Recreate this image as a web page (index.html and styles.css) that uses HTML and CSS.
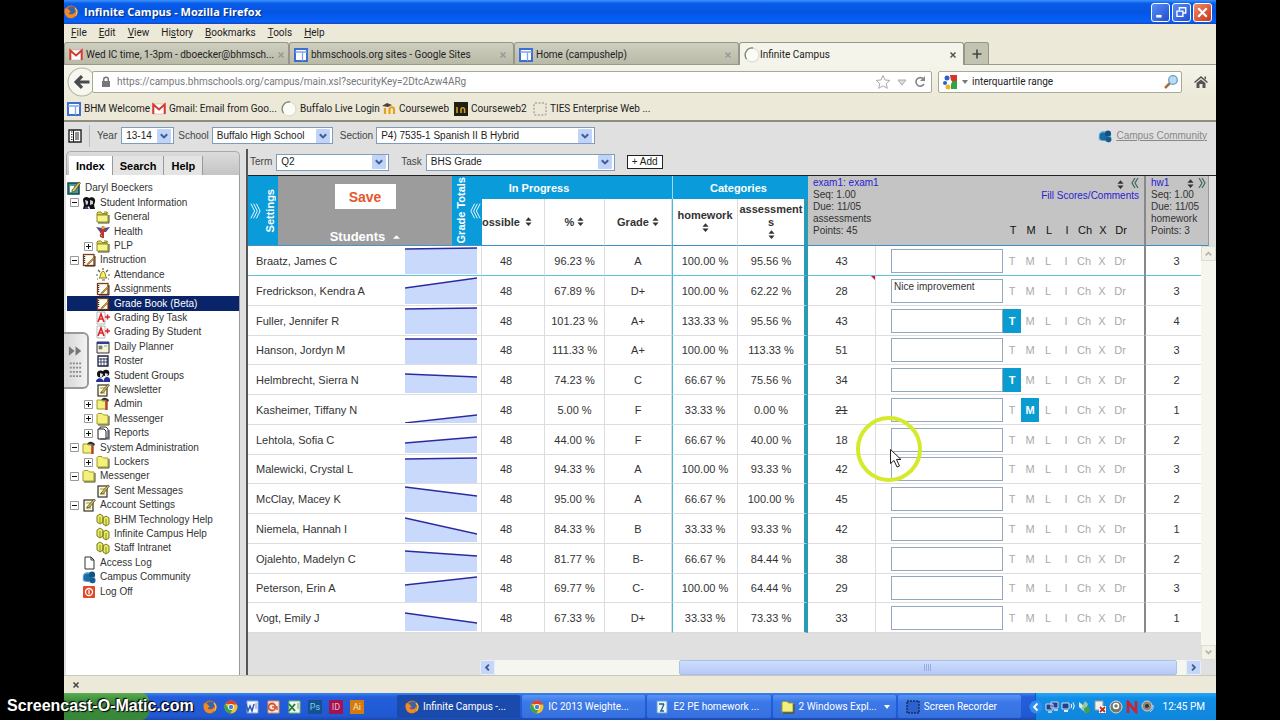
FILE: index.html
```html
<!DOCTYPE html>
<html lang="en">
<head>
<meta charset="utf-8">
<title>Infinite Campus - Mozilla Firefox</title>
<link rel="stylesheet" href="styles.css">
</head>
<body>
<svg class="defs" aria-hidden="true">
  <defs>
    <symbol id="firefox" viewBox="0 0 14 14"><circle cx="7" cy="7" r="6.5" fill="#e0701a"/><circle cx="7.6" cy="5.6" r="4" fill="#3d62a8"/><path d="M1 3c1 1 2 .6 3 1.200 2 0 1 2 3 2.500-1 1.300-2 .6-2.600 1.200C6 10.500 10 10 11 6.500c1.200 4-2 7-5 6.500C2 12.500-.2 8 1 3z" fill="#f08a24"/><path d="M11 3c2 2 2.500 5 .5 8" stroke="#f7c23c" stroke-width="1.300" fill="none"/></symbol>
    <symbol id="gmail" viewBox="0 0 14 12"><rect x=".5" y="1" width="13" height="10" rx="1" fill="#fff" stroke="#d9a5a0" stroke-width=".6"/><path d="M1.300 11V1.500L7 6.500l5.700-5V11" fill="none" stroke="#d43b30" stroke-width="2"/></symbol>
    <symbol id="sites" viewBox="0 0 14 14"><rect x="1" y="1" width="12" height="12" fill="#fff" stroke="#3c6fd1" stroke-width="2"/><path d="M1 4h12M8.500 4v9" stroke="#7ea6ec" stroke-width="1.300"/></symbol>
    <symbol id="ring" viewBox="0 0 16 16"><circle cx="8" cy="8" r="7" fill="#fcfcf7" stroke="#d5d5c8"/><path d="M2.500 12A7 7 0 0 1 9 1" fill="none" stroke="#7b8a78" stroke-width="1.300"/></symbol>
    <symbol id="moodle" viewBox="0 0 14 14"><path d="M3 12V6M7.500 12V7.500a2.200 2.200 0 0 1 4.500 0V12" fill="none" stroke="#e8a01c" stroke-width="2.200"/><path d="M0 4l5-3 5 2-4 2z" fill="#4b4537"/></symbol>
    <symbol id="moodledark" viewBox="0 0 14 14"><path d="M0 0h14v14H0z" fill="#201f14"/><path d="M3 11V5M7 11V7.500a1.800 1.800 0 0 1 3.600 0V11" fill="none" stroke="#d39c2a" stroke-width="1.600"/></symbol>
    <symbol id="dashed" viewBox="0 0 14 14"><rect x="1" y="1" width="12" height="12" rx="1" fill="none" stroke="#8b8b78" stroke-dasharray="2 1.500"/></symbol>
    <symbol id="close" viewBox="0 0 8 8"><path d="M1.500 1.500l5 5m0-5l-5 5" stroke="currentColor" stroke-width="1.500"/></symbol>
    <symbol id="chev" viewBox="0 0 14 14"><rect width="14" height="14" rx="1" fill="#c0d3f8"/><path d="M3.800 5.200L7 8.400l3.200-3.200" fill="none" stroke="#3f5c94" stroke-width="2"/></symbol>
    <symbol id="sort" viewBox="0 0 8 10"><path d="M4 0l3.500 4h-7zM4 10L.5 6h7z" fill="#333"/></symbol>
    <symbol id="community" viewBox="0 0 14 14"><path d="M6 2C2 2 0 5 1 7.500c-2 4 3 5 4 4l6 2c3-1 3-4 2-6 1-4-1-6-4-5z" fill="#6cb4d8"/><circle cx="5.500" cy="7.500" r="4" fill="#1c6ba3"/><circle cx="10" cy="4.500" r="3" fill="#14517f"/><circle cx="10.500" cy="10.500" r="2.800" fill="#185c8f"/></symbol>
    <symbol id="folder" viewBox="0 0 14 14"><path d="M1 4V2.500L2 1.500h4L7.500 3H12v9H1z" fill="#f3f07c" stroke="#a49b28"/><path d="M13 4v9H2" fill="none" stroke="#4b481b"/></symbol>
    <symbol id="dfolder" viewBox="0 0 14 14"><path d="M1 5V3l1-1h3l1 1.500h5V5zM8 2h3l1 1.500" fill="#dcd94c" stroke="#8d8b24"/><path d="M1 5h11v7H1z" fill="#f5f58a" stroke="#8d8b24"/><path d="M13 5v8H2" fill="none" stroke="#4b481b"/></symbol>
    <symbol id="tools" viewBox="0 0 14 14"><path d="M1 3h4l1 1h4v8H1z" fill="#f3f07c" stroke="#a49b28"/><path d="M5 2.500c3-3 6-2 8 .5l-1 2-2-1.500H7z" fill="#333"/><path d="M10.500 4v9" stroke="#b6402a" stroke-width="2.400"/></symbol>
    <symbol id="person" viewBox="0 0 14 14"><path d="M1 4c0-3 4-4 6-2 3-2 7 0 6 4l-1 3 1 4H8l-1-3-3 3H1l1-4z" fill="#111"/><path d="M3 4l3 1v3l-2 1zM8 4l3 1v3l-3 1z" fill="#c9ccd6"/><path d="M2 13l2-3 3 3z" fill="#2b38a5"/></symbol>
    <symbol id="group" viewBox="0 0 14 14"><circle cx="4.500" cy="5" r="3.500" fill="#111"/><circle cx="10" cy="4" r="3.300" fill="#111"/><path d="M0 13c0-5 7-5 8 0zM8 13c-1-6 5-6 6-3v3z" fill="#26329a"/><path d="M4 4l3 1-1 3H4zM9 4l3 1-1 3H9z" fill="#dde"/></symbol>
    <symbol id="health" viewBox="0 0 14 14"><path d="M0 2l6 1h2l6-1-4 5H4z" fill="#5b4a86"/><path d="M7 2v11" stroke="#c23434" stroke-width="2"/><path d="M10 5c-7 0-7 3-2 4-5 0-4 3-1 3" fill="none" stroke="#b23a2c" stroke-width="1.500"/><circle cx="7" cy="2.500" r="1.800" fill="#e3a02c"/></symbol>
    <symbol id="book" viewBox="0 0 14 14"><rect x="1.500" y="1.500" width="10.500" height="11" fill="#fffdf2" stroke="#7d3d25" stroke-width="1.300"/><path d="M2.500 3v8" stroke="#333" stroke-width="1.500" stroke-dasharray="1 1"/><path d="M6 10l6-6 1 1-6 6-2 .5z" fill="#d0a030" stroke="#634511" stroke-width=".5"/><path d="M13 3v10H3" fill="none" stroke="#4b2419"/></symbol>
    <symbol id="user" viewBox="0 0 14 14"><rect x="1" y="2" width="11" height="11" fill="#3f9b95" stroke="#15434f" stroke-width="1.500"/><path d="M3 5h4v6H3z" fill="#fff"/><path d="M5 9l7-8 1.500 1L8 10l-3 1z" fill="#edc24d" stroke="#333" stroke-width=".6"/></symbol>
    <symbol id="note" viewBox="0 0 14 14"><rect x="2" y="2" width="9" height="11" fill="#fdfbd1" stroke="#333" stroke-width="1.200"/><path d="M4 5h5M4 10h5" stroke="#98924a"/><path d="M5 9l7-8 1.500 1L8 9l-3 1z" fill="#dab942" stroke="#333" stroke-width=".6"/></symbol>
    <symbol id="bell" viewBox="0 0 14 14"><path d="M3 10c2-1 1-6 4-7 3 1 2 6 4 7z" fill="#f6ef63" stroke="#887e1d"/><path d="M0 7h2M12 7h2M2 2l2 2M12 2l-2 2M6 12h3M7 0v2M1 11h1M12 11h1" stroke="#5e5b36" stroke-width="1.200"/></symbol>
    <symbol id="grade" viewBox="0 0 14 14"><path d="M1 1h8v12H1z" fill="#fff" stroke="#b9b9b9"/><path d="M2 11l3-8 3 8M3 8h4" fill="none" stroke="#d22" stroke-width="1.600"/><path d="M9 6h5M11.500 3.500v5" stroke="#d22" stroke-width="1.500"/></symbol>
    <symbol id="planner" viewBox="0 0 14 14"><path d="M1 2h12v11H1z" fill="#f4f4d8" stroke="#333"/><path d="M1 2h12v2H1z" fill="#2b3fa2"/><path d="M3 6h3v3H3zM8 6h3" fill="#788" stroke="#667" stroke-width=".6"/></symbol>
    <symbol id="roster" viewBox="0 0 14 14"><path d="M2 2h10v10H2z" fill="#fff" stroke="#1b2148" stroke-width="1.300"/><path d="M2 5h10M2 8h10M5 4v8M8 4v8M11 4v8" stroke="#1b2148" stroke-width=".8"/></symbol>
    <symbol id="pages" viewBox="0 0 14 14"><path d="M4 1h6l2 2v9H4z" fill="#fff" stroke="#333"/><path d="M2 3h6l2 2v8H2z" fill="#fff" stroke="#222"/><path d="M13 4v9H4" fill="none" stroke="#445" stroke-width="1.200"/></symbol>
    <symbol id="page" viewBox="0 0 14 14"><path d="M3 1h6l3 3v9H3z" fill="#fff" stroke="#333"/><path d="M9 1v3h3" fill="none" stroke="#333"/></symbol>
    <symbol id="links" viewBox="0 0 14 14"><path d="M1 3l3-2 3 2v6l-3 2-3-2zM7 5l3-2 3 2v6l-3 2-3-2z" fill="#e9ec62" stroke="#77791f"/><path d="M4 4v7M10 6v7" stroke="#8d8f2b"/></symbol>
    <symbol id="power" viewBox="0 0 14 14"><rect x="1" y="1" width="12" height="12" rx="1" fill="#e04a28"/><circle cx="7" cy="7" r="3.500" fill="none" stroke="#fff" stroke-width="1.300"/><path d="M7 5v4" stroke="#fff" stroke-width="1.300"/></symbol>
    <symbol id="plus" viewBox="0 0 9 9"><path d="M.5.5h8v8h-8z" fill="#fff" stroke="#999"/><path d="M2 4.500h5M4.500 2v5" stroke="#111"/></symbol>
    <symbol id="minus" viewBox="0 0 9 9"><path d="M.5.5h8v8h-8z" fill="#fff" stroke="#999"/><path d="M2 4.500h5" stroke="#111"/></symbol>
    <symbol id="chrome" viewBox="0 0 14 14"><circle cx="7" cy="7" r="6.500" fill="#f1c22b"/><path d="M1.400 3.700A6.500 6.500 0 0 1 13 4.500H7z" fill="#db4331"/><path d="M1.300 3.800A6.500 6.500 0 0 0 6.500 13.500L8.500 9 4.500 8.500z" fill="#3ba24f"/><circle cx="7" cy="7" r="2.900" fill="#fff"/><circle cx="7" cy="7" r="2.200" fill="#4583d8"/></symbol>
    <symbol id="word" viewBox="0 0 14 14"><path d="M2 1h11v12H2z" fill="#f4f7fd" stroke="#8aa6da"/><path d="M1 4l2 7 2-5 2 5 2-7" fill="none" stroke="#2d5ab4" stroke-width="1.500"/><path d="M10 4h2M10 6h2M10 8h2" stroke="#7593cc"/></symbol>
    <symbol id="ppt" viewBox="0 0 14 14"><path d="M2 1h11v12H2z" fill="#fbeae2" stroke="#d98d6c"/><circle cx="6" cy="7" r="3.500" fill="none" stroke="#d4522a" stroke-width="1.800"/><path d="M6 7h5v3" fill="none" stroke="#d4522a" stroke-width="1.400"/></symbol>
    <symbol id="excel" viewBox="0 0 14 14"><path d="M2 1h11v12H2z" fill="#eef8ec" stroke="#7dba7c"/><path d="M2 4l6 7M8 4l-6 7" stroke="#24803a" stroke-width="1.900"/><path d="M10 4h2M10 6h2M10 8h2" stroke="#69a96a"/></symbol>
    <symbol id="snip" viewBox="0 0 14 14"><rect x="1" y="1" width="12" height="12" fill="#2c62cf" stroke="#111" stroke-dasharray="2 1"/></symbol>
    <symbol id="doc" viewBox="0 0 14 14"><path d="M2 1h10v12H2z" fill="#eaf5fc" stroke="#69a4c8"/><path d="M4 4h5M9 4L6 11M5 11h4" stroke="#26617d" stroke-width="1.300"/></symbol>
    <symbol id="pc" viewBox="0 0 14 14"><path d="M1 4h7v6H1zM6 2h7v6H6z" fill="#22408c" stroke="#c9d5ee"/><path d="M3 12h4M9 10h4" stroke="#d8e0f2" stroke-width="1.500"/></symbol>
  </defs>
</svg>

<div class="window">
  <header class="titlebar">
    <svg class="i14"><use href="#firefox"/></svg>
    <h1>Infinite Campus - Mozilla Firefox</h1>
    <div class="winbtns">
      <button aria-label="Minimize"><svg viewBox="0 0 16 16"><path d="M4 11.500h5" stroke="#fff" stroke-width="2.500"/></svg></button>
      <button aria-label="Restore"><svg viewBox="0 0 16 16"><path d="M6 6V3.500h6v5H9.500" fill="none" stroke="#fff" stroke-width="1.300"/><path d="M3.700 6.700h5.600v5H3.700z" fill="none" stroke="#fff" stroke-width="1.300"/></svg></button>
      <button class="red" aria-label="Close"><svg viewBox="0 0 16 16"><path d="M4 4l8 8m0-8l-8 8" stroke="#fff" stroke-width="2"/></svg></button>
    </div>
  </header>

  <nav class="menubar" aria-label="Menu">
    <button><u>F</u>ile</button><button><u>E</u>dit</button><button><u>V</u>iew</button><button>Hi<u>s</u>tory</button><button><u>B</u>ookmarks</button><button><u>T</u>ools</button><button><u>H</u>elp</button>
  </nav>

  <div class="tabs">
    <div class="tab"><svg class="i14"><use href="#gmail"/></svg><span>Wed IC time, 1-3pm - dboecker@bhmsch...</span><button aria-label="Close tab"><svg class="i8"><use href="#close"/></svg></button></div>
    <div class="tab"><svg class="i14"><use href="#sites"/></svg><span>bhmschools.org sites - Google Sites</span><button aria-label="Close tab"><svg class="i8"><use href="#close"/></svg></button></div>
    <div class="tab"><svg class="i14"><use href="#sites"/></svg><span>Home (campushelp)</span><button aria-label="Close tab"><svg class="i8"><use href="#close"/></svg></button></div>
    <div class="tab active"><svg class="i16"><use href="#ring"/></svg><span>Infinite Campus</span><button aria-label="Close tab"><svg class="i8"><use href="#close"/></svg></button></div>
    <button class="newtab" aria-label="New tab"><svg viewBox="0 0 12 12"><path d="M6 1.500v9M1.500 6h9" stroke="#444" stroke-width="1.600"/></svg></button>
  </div>

  <div class="navbar">
    <button class="back" aria-label="Back"><svg viewBox="0 0 28 28"><circle cx="14" cy="14" r="13" fill="#f7f7f0" stroke="#b5b5a6"/><path d="M21 14H9M14 8.500L8.500 14l5.500 5.500" fill="none" stroke="#474b4b" stroke-width="3"/></svg></button>
    <div class="urlbox">
      <svg class="lock" viewBox="0 0 10 12"><path d="M1 5h8v6H1z" fill="#777"/><path d="M2.700 5V3.500a2.300 2.300 0 0 1 4.600 0V5" fill="none" stroke="#777" stroke-width="1.500"/></svg>
      <input type="text" aria-label="Address" value="https://campus.bhmschools.org/campus/main.xsl?securityKey=2DtcAzw4ARg">
      <svg class="i16" viewBox="0 0 16 16"><path d="M8 1.500l2 4.500 4.800.4-3.600 3.200 1.100 4.700L8 11.800l-4.300 2.500 1.100-4.700L1.200 6.400 6 6z" fill="#fff" stroke="#aaa"/></svg>
      <svg class="i14" viewBox="0 0 14 14"><path d="M3 5h8l-4 5z" fill="#ddd" stroke="#aaa"/></svg>
      <svg class="i14" viewBox="0 0 14 14"><path d="M11 9a4.300 4.300 0 1 1-.5-5" fill="none" stroke="#888" stroke-width="1.700"/><path d="M12 1v5H7z" fill="#888"/></svg>
    </div>
    <div class="searchbox">
      <svg class="i16" viewBox="0 0 16 16"><path d="M8 1h7v6H9z" fill="#d7352c"/><path d="M8 7h7v8H9V9z" fill="#33a342"/><circle cx="5" cy="4" r="2.500" fill="#2f62c4"/><circle cx="3" cy="9" r="2" fill="#2f62c4"/><circle cx="6" cy="13" r="2.500" fill="#edb62e"/><circle cx="8" cy="8" r="2" fill="#fff"/></svg>
      <svg class="caret" viewBox="0 0 6 4"><path d="M0 0h6L3 4z" fill="#777"/></svg>
      <input type="text" aria-label="Search" value="interquartile range">
      <svg class="i16" viewBox="0 0 16 16"><path d="M2 14l5-5" stroke="#a5703b" stroke-width="2.500"/><circle cx="10" cy="6" r="4.300" fill="#b7dcf3" stroke="#6f9dc4" stroke-width="1.300"/></svg>
    </div>
    <button class="home" aria-label="Home"><svg class="i16" viewBox="0 0 16 16"><path d="M1 8l7-6 7 6-1 1-6-5-6 5zM3.500 9L8 5.500 12.500 9v5H9.500v-4h-3v4h-3zM11.500 2.500h1.500v3l-1.500-1z" fill="#555"/></svg></button>
  </div>

  <nav class="bookmarks" aria-label="Bookmarks">
    <a href="#"><svg class="i14"><use href="#sites"/></svg>BHM Welcome</a>
    <a href="#"><svg class="i14"><use href="#gmail"/></svg>Gmail: Email from Goo...</a>
    <a href="#"><svg class="i16"><use href="#ring"/></svg>Buffalo Live Login</a>
    <a href="#"><svg class="i14"><use href="#moodle"/></svg>Courseweb</a>
    <a href="#"><svg class="i14"><use href="#moodledark"/></svg>Courseweb2</a>
    <a href="#"><svg class="i14"><use href="#dashed"/></svg>TIES Enterprise Web ...</a>
  </nav>

  <main class="app">
    <form class="context">
      <button class="toggle" type="button" aria-label="Toggle outline"><svg viewBox="0 0 14 14"><path d="M1 1h12v12H1z" fill="#fff" stroke="#222" stroke-width="1.400"/><path d="M3 3h1.500M3 5.500h1.500M3 8h1.500M3 10.500h1.500M7 4h4M7 6h4M7 8h4M7 10h4" stroke="#222"/><path d="M5.500 1v12" stroke="#222"/></svg></button>
      <label for="year">Year</label>
      <span class="pick year"><select id="year"><option>13-14</option></select><svg><use href="#chev"/></svg></span>
      <label for="school">School</label>
      <span class="pick school"><select id="school"><option>Buffalo High School</option></select><svg><use href="#chev"/></svg></span>
      <label for="section">Section</label>
      <span class="pick section"><select id="section"><option>P4) 7535-1 Spanish II B Hybrid</option></select><svg><use href="#chev"/></svg></span>
      <a class="community" href="#"><svg class="i14"><use href="#community"/></svg><span>Campus Community</span></a>
    </form>

    <div class="panes">
      <aside class="sidebar">
        <div class="sidetabs"><button class="on">Index</button><button>Search</button><button>Help</button></div>
        <ul class="tree">
          <li class="l0"><svg class="i14"><use href="#user"/></svg>Daryl Boeckers</li>
          <li class="l1"><i><svg><use href="#minus"/></svg></i><svg class="i14"><use href="#person"/></svg>Student Information</li>
          <li class="l2"><i></i><svg class="i14"><use href="#dfolder"/></svg>General</li>
          <li class="l2"><i></i><svg class="i14"><use href="#health"/></svg>Health</li>
          <li class="l2"><i><svg><use href="#plus"/></svg></i><svg class="i14"><use href="#dfolder"/></svg>PLP</li>
          <li class="l1"><i><svg><use href="#minus"/></svg></i><svg class="i14"><use href="#book"/></svg>Instruction</li>
          <li class="l2"><i></i><svg class="i14"><use href="#bell"/></svg>Attendance</li>
          <li class="l2"><i></i><svg class="i14"><use href="#book"/></svg>Assignments</li>
          <li class="l2 sel"><i></i><svg class="i14"><use href="#book"/></svg>Grade Book (Beta)</li>
          <li class="l2"><i></i><svg class="i14"><use href="#grade"/></svg>Grading By Task</li>
          <li class="l2"><i></i><svg class="i14"><use href="#grade"/></svg>Grading By Student</li>
          <li class="l2"><i></i><svg class="i14"><use href="#planner"/></svg>Daily Planner</li>
          <li class="l2"><i></i><svg class="i14"><use href="#roster"/></svg>Roster</li>
          <li class="l2"><i></i><svg class="i14"><use href="#group"/></svg>Student Groups</li>
          <li class="l2"><i></i><svg class="i14"><use href="#note"/></svg>Newsletter</li>
          <li class="l2"><i><svg><use href="#plus"/></svg></i><svg class="i14"><use href="#tools"/></svg>Admin</li>
          <li class="l2"><i><svg><use href="#plus"/></svg></i><svg class="i14"><use href="#folder"/></svg>Messenger</li>
          <li class="l2"><i><svg><use href="#plus"/></svg></i><svg class="i14"><use href="#pages"/></svg>Reports</li>
          <li class="l1"><i><svg><use href="#minus"/></svg></i><svg class="i14"><use href="#tools"/></svg>System Administration</li>
          <li class="l2"><i><svg><use href="#plus"/></svg></i><svg class="i14"><use href="#folder"/></svg>Lockers</li>
          <li class="l1"><i><svg><use href="#minus"/></svg></i><svg class="i14"><use href="#folder"/></svg>Messenger</li>
          <li class="l2"><i></i><svg class="i14"><use href="#note"/></svg>Sent Messages</li>
          <li class="l1"><i><svg><use href="#minus"/></svg></i><svg class="i14"><use href="#note"/></svg>Account Settings</li>
          <li class="l2"><i></i><svg class="i14"><use href="#links"/></svg>BHM Technology Help</li>
          <li class="l2"><i></i><svg class="i14"><use href="#links"/></svg>Infinite Campus Help</li>
          <li class="l2"><i></i><svg class="i14"><use href="#links"/></svg>Staff Intranet</li>
          <li class="l1"><i></i><svg class="i14"><use href="#page"/></svg>Access Log</li>
          <li class="l1"><i></i><svg class="i14"><use href="#community"/></svg>Campus Community</li>
          <li class="l1"><i></i><svg class="i14"><use href="#power"/></svg>Log Off</li>
        </ul>
        <button class="pull" aria-label="Expand panel"><svg viewBox="0 0 24 56"><path d="M5 13l6 5-6 5zM12 13l6 5-6 5z" fill="#777"/><path d="M6 31h12M6 35.500h12M6 40h12M6 44.500h12" stroke="#888" stroke-width="2" stroke-dasharray="2 1.300"/></svg></button>
      </aside>

      <section class="content">
        <form class="filters">
          <label for="term">Term</label>
          <span class="pick term"><select id="term"><option>Q2</option></select><svg><use href="#chev"/></svg></span>
          <label for="task">Task</label>
          <span class="pick task"><select id="task"><option>BHS Grade</option></select><svg><use href="#chev"/></svg></span>
          <button class="add" type="button">+ Add</button>
        </form>

        <div class="book">
          <table class="grades">
            <colgroup><col><col class="c-spark"><col class="c-poss"><col class="c-pct"><col class="c-grade"><col class="c-hw"><col class="c-as"><col class="c-score"><col class="c-comment"><col class="c-hw1"></colgroup>
            <thead>
              <tr class="groups">
                <th colspan="2" rowspan="2" class="lead">
                  <div class="leadbox">
                    <button class="side settings"><svg viewBox="0 0 12 20"><path d="M1 2l4 8-4 8M4 2l4 8-4 8M7 2l4 8-4 8" fill="none" stroke="#fff"/></svg><span>Settings</span></button>
                    <div class="mid"><button class="save">Save</button><div class="students">Students <svg viewBox="0 0 8 4"><path d="M4 0l4 4H0z" fill="#fff"/></svg></div></div>
                    <button class="side totals"><span>Grade Totals</span><svg viewBox="0 0 12 20"><path d="M11 2l-4 8 4 8M8 2l-4 8 4 8M5 2l-4 8 4 8" fill="none" stroke="#fff"/></svg></button>
                  </div>
                </th>
                <th colspan="3" class="group progress">In Progress</th>
                <th colspan="2" class="group cats">Categories</th>
                <th colspan="2" rowspan="2" class="exam">
                  <div class="exambox">
                    <div class="meta"><a href="#">exam1: exam1</a><br>Seq: 1.00<br>Due: 11/05<br>assessments<br>Points: 45</div>
                    <div class="tools">
                      <div class="icons"><svg class="sort"><use href="#sort"/></svg><svg class="dbl" viewBox="0 0 8 10"><path d="M4 0L1 5l3 5M7 0L4 5l3 5" fill="none" stroke="#3d6660" stroke-width="1.200"/></svg></div>
                      <a href="#">Fill Scores/Comments</a>
                      <div class="flags"><span>T</span><span>M</span><span>L</span><span>I</span><span>Ch</span><span>X</span><span>Dr</span></div>
                    </div>
                  </div>
                </th>
                <th rowspan="2" class="exam hw1"><div class="exambox"><div class="meta"><a href="#">hw1</a><br>Seq: 1.00<br>Due: 11/05<br>homework<br>Points: 3</div><svg class="sort"><use href="#sort"/></svg></div></th>
              </tr>
              <tr class="cols">
                <th class="poss">ossible <svg class="sort"><use href="#sort"/></svg></th>
                <th>% <svg class="sort"><use href="#sort"/></svg></th>
                <th>Grade <svg class="sort"><use href="#sort"/></svg></th>
                <th class="bl">homework<br><svg class="sort"><use href="#sort"/></svg></th>
                <th class="as">assessments<br><svg class="sort"><use href="#sort"/></svg></th>
              </tr>
            </thead>
            <tbody id="rows"></tbody>
          </table>
          <div class="vscroll">
            <div class="headend"><svg class="dbl" viewBox="0 0 8 10"><path d="M1 0l3 5-3 5M4 0l3 5-3 5" fill="none" stroke="#3d6660" stroke-width="1.200"/></svg></div>
            <button aria-label="Scroll up"><svg viewBox="0 0 14 14"><path d="M4 9l3-3 3 3" fill="none" stroke="#bbb8a8" stroke-width="2"/></svg></button>
            <div class="track"></div>
            <button aria-label="Scroll down"><svg viewBox="0 0 14 14"><path d="M4 5l3 3 3-3" fill="none" stroke="#bbb8a8" stroke-width="2"/></svg></button>
          </div>
        </div>
        <div class="hscroll">
          <button aria-label="Scroll left"><svg viewBox="0 0 14 14"><path d="M8.500 4l-3 3 3 3" fill="none" stroke="#3f5c94" stroke-width="2"/></svg></button>
          <div class="track"><div class="thumb"><svg viewBox="0 0 8 7"><path d="M.5 0v7M2.500 0v7M4.500 0v7M6.500 0v7" stroke="#94afe6"/></svg></div></div>
          <button aria-label="Scroll right"><svg viewBox="0 0 14 14"><path d="M5.500 4l3 3-3 3" fill="none" stroke="#3f5c94" stroke-width="2"/></svg></button>
        </div>
      </section>
    </div>
  </main>

  <footer class="addon"><button aria-label="Close add-on bar"><svg class="i8"><use href="#close"/></svg></button></footer>

  <div class="taskbar">
    <button class="start" aria-label="Start"></button>
    <div class="quick">
      <svg class="i14"><use href="#firefox"/></svg><svg class="i14"><use href="#chrome"/></svg><svg class="i14"><use href="#word"/></svg><svg class="i14"><use href="#ppt"/></svg><svg class="i14"><use href="#excel"/></svg>
      <span class="adobe ps">Ps</span><span class="adobe id">ID</span><span class="adobe ai">Ai</span>
    </div>
    <div class="tasks">
      <button class="cur"><svg class="i14"><use href="#firefox"/></svg>Infinite Campus -...</button>
      <button><svg class="i14"><use href="#chrome"/></svg>IC 2013 Weighte...</button>
      <button><svg class="i14"><use href="#doc"/></svg>E2 PE homework ...</button>
      <button><svg class="i14"><use href="#folder"/></svg><span>2 Windows Expl...</span><svg class="caret" viewBox="0 0 6 4"><path d="M0 0h6L3 4z" fill="#fff"/></svg></button>
      <button><svg class="i14"><use href="#snip"/></svg>Screen Recorder</button>
    </div>
    <div class="tray">
      <svg class="i14 hide" viewBox="0 0 14 14"><circle cx="7" cy="7" r="6.500" fill="#2f8df0"/><path d="M8.500 3.500L5 7l3.500 3.500" fill="none" stroke="#fff" stroke-width="1.800"/></svg>
      <svg class="i14"><use href="#pc"/></svg>
      <svg class="i14" viewBox="0 0 14 14"><path d="M1 3h7v6H1z" fill="#223f8e" stroke="#d3def2"/><path d="M3 11h4" stroke="#e5ebf7" stroke-width="2"/><path d="M10 4q1.500 2 0 4M12 2.500q2.500 3.500 0 7" fill="none" stroke="#fff"/></svg>
      <svg class="i14" viewBox="0 0 14 14"><path d="M2 2l10 8-3 3-7-6z" fill="#dcebdc"/><path d="M8 1l3 3-3 8-4-3z" fill="#9cc7a5"/><circle cx="10" cy="10" r="3" fill="#3da14a"/></svg>
      <svg class="i14" viewBox="0 0 14 14"><path d="M2 1h8v9H2z" fill="#f0f0f0" stroke="#999"/><path d="M6 6h7v7H6z" fill="#fff"/><path d="M7 7l5 5m0-5l-5 5" stroke="#c92a22" stroke-width="1.800"/></svg>
      <svg class="i14" viewBox="0 0 14 14"><circle cx="7" cy="7" r="6" fill="#72786c" stroke="#d8dcd2"/><circle cx="7" cy="6" r="2.500" fill="none" stroke="#fff" stroke-width="1.500"/></svg>
      <svg class="i14" viewBox="0 0 14 14"><path d="M3 13V2l8 10V1" fill="none" stroke="#d3202c" stroke-width="2.600"/></svg>
      <svg class="i14" viewBox="0 0 14 14"><circle cx="6" cy="6" r="5" fill="#8d8578" stroke="#d9d3c8"/><circle cx="6" cy="6" r="2" fill="#333"/><path d="M12 5q1.500 4-3 7" fill="none" stroke="#ddd"/></svg>
      <time>12:45 PM</time>
    </div>
  </div>
</div>

<div class="watermark">Screencast-O-Matic.com</div>
<svg class="pointer" viewBox="0 0 68 68" aria-hidden="true"><circle cx="34" cy="34" r="31" fill="none" stroke="#d4ea2a" stroke-width="4"/><path d="M35.500 34.500v14l3.500-3 3 6.500 2.500-1-3-6.500h4.500z" fill="#fff" stroke="#222"/></svg>
<script src="rows.js"></script>
</body>
</html>
```
FILE: rows.js
```js
// name, trend start, trend end, in-progress %, grade, homework, assessments, exam score, hw score, options
const students = [
  ["Braatz, James C", 3, 2, "96.23", "A", "100.00", "95.56", 43, 3],
  ["Fredrickson, Kendra A", 12, 2, "67.89", "D+", "100.00", "62.22", 28, 3, { note: "Nice improvement" }],
  ["Fuller, Jennifer R", 3, 2, "101.23", "A+", "133.33", "95.56", 43, 4, { flag: "T" }],
  ["Hanson, Jordyn M", 3, 3, "111.33", "A+", "100.00", "113.33", 51, 3],
  ["Helmbrecht, Sierra N", 9, 12, "74.23", "C", "66.67", "75.56", 34, 2, { flag: "T" }],
  ["Kasheimer, Tiffany N", 28, 20, "5.00", "F", "33.33", "0.00", 21, 1, { flag: "M" }],
  ["Lehtola, Sofia C", 18, 12, "44.00", "F", "66.67", "40.00", 18, 2],
  ["Malewicki, Crystal L", 4, 3, "94.33", "A", "100.00", "93.33", 42, 3],
  ["McClay, Macey K", 3, 12, "95.00", "A", "66.67", "100.00", 45, 2],
  ["Niemela, Hannah I", 4, 20, "84.33", "B", "33.33", "93.33", 42, 1],
  ["Ojalehto, Madelyn C", 7, 12, "81.77", "B-", "66.67", "84.44", 38, 2],
  ["Peterson, Erin A", 11, 3, "69.77", "C-", "100.00", "64.44", 29, 3],
  ["Vogt, Emily J", 10, 20, "67.33", "D+", "33.33", "73.33", 33, 1]
];
const flags = ["T", "M", "L", "I", "Ch", "X", "Dr"];

document.getElementById("rows").innerHTML = students.map(
  ([name, from, to, pct, grade, hw, as, score, hw1, opt = {}]) => `
  <tr>
    <td class="name">${name}</td>
    <td class="spark"><svg viewBox="0 0 72 28"><path d="M0 ${from}L72 ${to}V28H0z" fill="#c9d9fb"/><path d="M0 ${from}L72 ${to}" stroke="#2a2aa0" stroke-width="1.300"/></svg></td>
    <td class="points">48</td>
    <td>${pct} %</td>
    <td>${grade}</td>
    <td class="bl">${hw} %</td>
    <td class="as">${as} %</td>
    <td class="score${opt.note ? " noted" : ""}">${opt.flag === "M" ? `<s>${score}</s>` : score}</td>
    <td class="comment"><div><textarea rows="1" aria-label="Comment for ${name}">${opt.note || ""}</textarea>${
      flags.map(f => `<button${f === opt.flag ? ' class="on"' : ""}>${f}</button>`).join("")
    }</div></td>
    <td class="hw1">${hw1}</td>
  </tr>`).join("");
```
FILE: styles.css
```css
* { box-sizing: border-box; }
body { margin: 0; background: #000; font: 10px/14px Roboto, "Liberation Sans", sans-serif; color: #222; }
button { font: inherit; color: inherit; border: 0; padding: 0; background: none; }
svg { display: block; flex: none; }
a { color: #2a22d0; text-decoration: none; }
.defs { position: absolute; width: 0; height: 0; }
.i14 { width: 14px; height: 14px; }
.i16 { width: 16px; height: 16px; }
.i8 { width: 8px; height: 8px; }
.caret { width: 6px; height: 4px; }

.window { margin: 0 64px; min-height: 100vh; display: flex; flex-direction: column; background: #ece9d8; }

.titlebar { height: 24px; display: flex; align-items: center; gap: 6px; padding: 0 4px 0 0; background: linear-gradient(#3a93ff, #0a5be8 15%, #0455e0 50%, #0562fb 90%, #1c45b8); }
.titlebar h1 { flex: 1; margin: 0; font: bold 11px/16px "Open Sans", sans-serif; color: #fff; text-shadow: 1px 1px 1px #0a2d80; }
.winbtns { display: flex; gap: 2px; }
.winbtns button { width: 19px; height: 19px; border: 1px solid #fff; border-radius: 3px; background: linear-gradient(135deg, #5b8cf5, #1e4fd0); }
.winbtns .red { background: linear-gradient(135deg, #f08a68, #c8371a); }
.winbtns svg { width: 17px; height: 17px; }

.menubar { height: 18px; display: flex; align-items: center; gap: 12px; padding: 0 7px; }

.tabs { display: flex; height: 23px; border-bottom: 1px solid #9a9a88; }
.tab { width: 225px; display: flex; align-items: center; gap: 3px; padding: 2px 6px 0 4px; background: linear-gradient(#cfcfbf, #b9b9a8); border: 1px solid #96968a; border-bottom: 0; border-radius: 3px 3px 0 0; }
.tab span { flex: 1; white-space: nowrap; }
.tab button { color: #999; }
.tab.active { background: #f4f4ea; height: 23px; }
.tab.active button { color: #555; }
.tab.active .i16 { margin-right: -3px; }
.newtab { width: 25px; background: #c3c3b2; border: 1px solid #96968a; border-bottom: 0; border-radius: 3px 3px 0 0; display: grid; place-items: center; }
.newtab svg { width: 12px; height: 12px; }

.navbar { height: 33px; display: flex; align-items: center; padding: 0 7px 0 3px; background: linear-gradient(#f4f4ea, #ece9d8); }
.back svg { width: 30px; height: 30px; }
.urlbox, .searchbox { height: 22px; display: flex; align-items: center; background: #fff; border: 1px solid #a9a998; border-radius: 2px; }
.urlbox { flex: 1; margin-left: -5px; padding: 0 4px 0 8px; gap: 4px; }
.lock { width: 10px; height: 12px; }
.searchbox { width: 244px; margin: 0 11px 0 6px; padding: 0 2px 0 3px; gap: 4px; }
.navbar input { flex: 1; min-width: 0; border: 0; padding: 0; margin: 0; font: inherit; background: none; color: #222; }
.urlbox input { color: #777; padding-left: 2px; }

.bookmarks { height: 24px; display: grid; grid-template-columns: 85px 129px 101px 72px 79px 1fr; align-items: center; padding: 0 3px; border-bottom: 2px solid #8d8d80; }
.bookmarks a { display: flex; align-items: center; gap: 3px; color: #222; white-space: nowrap; }

.app { flex: 1; display: flex; flex-direction: column; background: #e0e0e0; font-family: "Liberation Sans", Arial, sans-serif; }
.context { height: 27px; display: flex; align-items: center; padding: 0 9px 0 3px; }
.context label, .filters label { color: #444; }
.toggle { padding: 4px 7px 4px 1px; margin-right: 7px; border-right: 1px solid #bbb; }
.toggle svg { width: 14px; height: 14px; }
.pick { display: inline-grid; grid-template-columns: 1fr 16px; align-items: center; height: 17px; background: #fff; border: 1px solid #7f9db9; }
.pick select { grid-area: 1 / 1 / 2 / 3; appearance: none; border: 0; background: none; padding: 0 16px 0 4px; width: 100%; height: 15px; font: inherit; color: #222; }
.pick svg { grid-area: 1 / 2 / 2 / 3; width: 14px; height: 14px; pointer-events: none; }
.year { width: 53px; margin: 0 4px; }
.school { width: 121px; margin: 0 7px 0 3px; }
.section { width: 219px; margin-left: 3px; }
.community { margin-left: auto; display: flex; align-items: center; gap: 4px; color: #888; }
.community span { text-decoration: underline; }

.panes { flex: 1; display: flex; }
.sidebar { position: relative; width: 184px; padding: 2px 6px 0 2px; border-right: 2px solid #555; display: flex; flex-direction: column; }
.sidetabs { display: flex; height: 24px; padding: 4px 2px 0; border: 1px solid #aaa; border-bottom: 0; border-radius: 5px 5px 0 0; background: linear-gradient(#dcdcdc, #c4c4c4); font-size: 11px; font-weight: bold; color: #000; }
.sidetabs button { padding: 0 7px; border-right: 1px solid #999; background: #e4e4e4; }
.sidetabs .on { background: #fff; }
.tree { flex: 1; list-style: none; margin: 0; padding: 6px 0 0 1px; background: #fff; border-right: 1px solid #999; color: #333; }
.tree li { height: 14px; display: flex; align-items: center; gap: 4px; white-space: nowrap; }
.tree li:nth-child(5n+2), .tree li:nth-child(5n+4) { height: 15px; }
.tree i { width: 14px; margin-right: -4px; padding-left: 2px; }
.tree i svg { width: 9px; height: 9px; }
.tree .l1 { padding-left: 1px; }
.tree .l2 { padding-left: 15px; }
.tree .sel { background: #0a246a; color: #fff; }
.pull { position: absolute; left: 0; top: 183px; border: 2px solid #999; border-left: 0; border-radius: 0 6px 6px 0; background: linear-gradient(90deg, #d5d5d5, #f2f2f2); }
.pull svg { width: 23px; height: 53px; }

.content { flex: 1; min-width: 0; display: flex; flex-direction: column; }
.filters { height: 26px; display: flex; align-items: center; padding-left: 2px; }
.term { width: 113px; margin: 0 12px 0 4px; }
.task { width: 189px; margin: 0 12px 0 4px; }
.add { height: 14px; padding: 0 4px; border: 1px solid #222; background: #fff; font-size: 10px; line-height: 12px; }

.book { flex: 1; display: flex; align-items: stretch; border-top: 1px solid #222; }
.grades { flex: 1; align-self: flex-start; min-width: 0; table-layout: fixed; border-collapse: separate; border-spacing: 0; font-size: 11px; color: #333; }
.c-spark { width: 77px; }
.c-poss { width: 63px; }
.c-pct { width: 60px; }
.c-grade { width: 67px; }
.c-hw { width: 66px; }
.c-as { width: 70px; }
.c-score { width: 68px; }
.c-comment { width: 268px; }
.c-hw1 { width: 57px; }
.grades th, .grades td { padding: 0; }
.leadbox { display: flex; height: 70px; border-bottom: 1px solid #4a90c0; }
.side { width: 30px; display: flex; align-items: center; justify-content: center; gap: 2px; background: #0a9cda; color: #fff; }
.side span { writing-mode: vertical-rl; transform: rotate(180deg); white-space: nowrap; }
.side svg { width: 11px; height: 20px; }
.mid { flex: 1; display: flex; flex-direction: column; align-items: center; justify-content: space-between; padding: 8px 0 0; background: #9c9c9c; color: #fff; }
.save { width: 61px; height: 25px; background: #fff; color: #e4572a; font-size: 14px; }
.students { display: flex; align-items: center; gap: 8px; font-size: 13px; line-height: 16px; }
.students svg { width: 7px; height: 4px; }
.group { height: 23px; background: #0a9cda; color: #fff; }
.grades .progress { padding-right: 76px; }
.cats { border-left: 1px solid #9fd8ef; border-right: 4px solid #0a9cda; }
.cols th { height: 47px; background: #fff; border-right: 1px solid #ddd; border-bottom: 1px solid #3a8fc4; line-height: 13px; overflow-wrap: anywhere; }
.cols .poss { text-align: left; white-space: nowrap; }
.sort { width: 7px; height: 9px; display: inline-block; }
.poss .sort { margin-left: 2px; }
.grades .bl { border-left: 1px solid #4ab8d4; }
.grades .as { border-right: 4px solid #2a9bb5; }
.exam { background: #c4c4c4; border-bottom: 1px solid #3a8fc4; font-weight: normal; vertical-align: top; }
.exambox { display: flex; justify-content: space-between; height: 69px; padding: 1px 5px 0; text-align: left; font-size: 10px; line-height: 12px; }
.grades .hw1 { border-left: 2px solid #888; }
.exambox .sort { margin: 2px 3px 0 0; }
.hw1 .exambox { padding-right: 4px; }
.hw1 .meta { width: 48px; margin-right: -12px; white-space: nowrap; }
.tools { text-align: right; display: flex; flex-direction: column; }
.icons { display: flex; justify-content: flex-end; gap: 4px; height: 13px; padding-top: 1px; }
.dbl { width: 8px; height: 10px; }
.flags { margin: 19px 9px 0 0; display: flex; justify-content: flex-end; font-size: 11px; line-height: 18px; color: #111; }
.flags span { width: 18px; text-align: center; }

.grades td { height: 30px; background: #fff; text-align: center; border-bottom: 1px solid #ddd; border-right: 1px solid #ddd; }
.grades tbody tr:nth-child(4n) td { height: 29px; }
.grades tbody tr:first-child td { border-bottom-color: #5fc3d6; }
.grades .name { text-align: left; padding-left: 8px; border-right: 0; }
.grades .spark { vertical-align: top; }
.grades .points { padding-right: 14px; }
.spark svg { width: 72px; height: 28px; }
.grades .score { position: relative; }
.noted::after { content: ""; position: absolute; top: 0; right: 0; border: 2px solid #d0103a; border-left-color: transparent; border-bottom-color: transparent; }
.comment div { display: flex; padding-left: 15px; }
.comment textarea { width: 112px; height: 24px; resize: none; overflow: hidden; border: 1px solid #93a7bf; margin: 0; padding: 1px 2px; background: #fff; font: 10px/12px "Liberation Sans", Arial, sans-serif; color: #333; }
.comment button { width: 18px; height: 24px; color: #aaa; }
.comment .on { background: #0a9cd0; color: #fff; font-weight: bold; }
.grades td.comment, .grades td.hw1 { border-right: 0; }
.grades td.hw1 { padding-left: 6px; }

.vscroll { width: 15px; display: flex; flex-direction: column; }
.headend { height: 70px; width: 8px; padding-top: 2px; background: #c4c4c4; border-right: 1px solid #999; border-bottom: 1px solid #3a8fc4; }
.headend .dbl { margin-left: -3px; }
.vscroll button, .hscroll button { width: 15px; height: 15px; border: 1px solid #deddd0; border-radius: 2px; background: #f3f2e8; }
.vscroll button svg, .hscroll button svg { width: 13px; height: 13px; }
.vscroll .track { flex: 1; background: #f6f6ee; }
.hscroll { display: flex; height: 15px; padding-left: 232px; padding-right: 15px; background: #e0e0e0; }
.hscroll button { background: #c6d6f8; border-color: #e8effc; }
.hscroll .track { flex: 1; background: #f6f6f0; display: flex; justify-content: flex-end; padding-right: 9px; }
.thumb { width: 73%; background: linear-gradient(#cfdcfc, #b4caf7); border: 1px solid #a9c0ee; border-radius: 2px; display: grid; place-items: center; }
.thumb svg { width: 8px; height: 7px; }

.addon { height: 18px; display: flex; align-items: center; padding-left: 8px; border-top: 1px solid #c9c7b8; color: #444; }

.taskbar { height: 27px; display: flex; align-items: stretch; background: linear-gradient(#3a83ee, #245edb 15%, #2159d3 85%, #1a48b0); color: #fff; }
.start { width: 85px; background: linear-gradient(#5cad54, #3c8c3a 30%, #37863a); border-radius: 0 8px 8px 0; }
.quick { width: 247px; display: flex; align-items: center; gap: 7px; padding-left: 54px; }
.adobe { width: 14px; height: 14px; font-size: 9px; text-align: center; }
.ps { background: #16508e; color: #7ad0f5; }
.id { background: #a3134f; color: #f5b3cd; }
.ai { background: #d57a12; color: #ffe9a8; }
.tasks { flex: 1; display: flex; gap: 2px; padding: 2px 14px 2px 1px; }
.tasks button { flex: 1 1 0; min-width: 0; display: flex; align-items: center; gap: 4px; padding: 0 6px 0 8px; border-radius: 2px; background: linear-gradient(#5a94f4, #3c79e8 30%, #3670de); white-space: nowrap; }
.tasks span { flex: 1; text-align: left; }
.tasks .cur { background: #1b4aad; }
.tray { width: 181px; display: flex; align-items: center; gap: 2px; padding-right: 11px; background: linear-gradient(#28a5f5, #118fe6 20%, #0f86dc); border-left: 1px solid #0b5bb5; }
.tray .hide { margin-left: -7px; }
.tray time { margin-left: auto; white-space: nowrap; }

.watermark { position: absolute; left: 7px; bottom: 4px; font: bold 16px/20px "Liberation Sans", Arial, sans-serif; color: #fff; text-shadow: 1px 1px 1px #000, -1px -1px 1px #000; }
.pointer { position: absolute; left: 855px; top: 415px; width: 68px; height: 68px; pointer-events: none; }
```
